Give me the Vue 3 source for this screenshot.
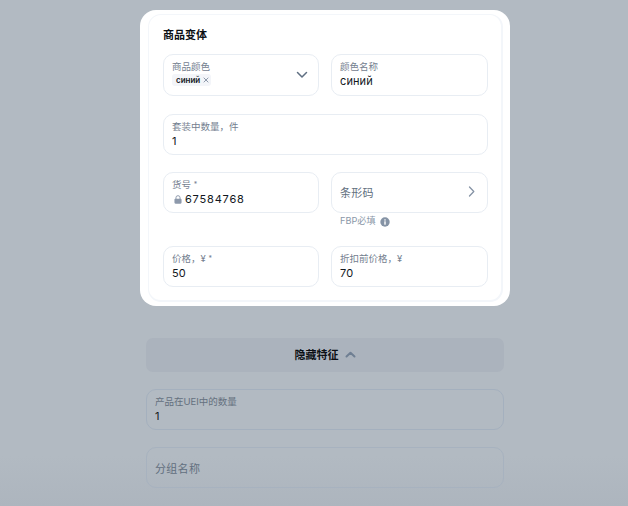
<script setup>
</script>

<template>
  <div class="page">
    <section class="card">
      <div class="inner">
        <h2 class="title">商品变体</h2>
        <div class="grid">
          <div class="field tall select">
            <div>
              <div class="label">商品颜色</div>
              <span class="tag">синий
                <svg width="6" height="6" viewBox="0 0 6 6"><path d="M.7.7l4.600 4.600M5.300.7L.7 5.300" stroke="#8d99ab" stroke-width="1" fill="none"/></svg>
              </span>
            </div>
            <svg class="chev" width="12" height="8" viewBox="0 0 12 8"><path d="M1.500 1.500L6 6l4.500-4.500" stroke="#5f6f82" stroke-width="1.500" fill="none" stroke-linecap="round" stroke-linejoin="round"/></svg>
          </div>
          <div class="field tall">
            <div class="label">颜色名称</div>
            <div class="value">синий</div>
          </div>
          <div class="field wide r2">
            <div class="label">套装中数量，件</div>
            <div class="value">1</div>
          </div>
          <div class="field r3">
            <div class="label">货号 <span class="star">*</span></div>
            <div class="value lockrow">
              <svg width="8" height="9" viewBox="0 0 9 10"><path d="M2.200 4.500V3a2.300 2.300 0 0 1 4.600 0v1.500" stroke="#8d99ab" stroke-width="1.100" fill="none"/><rect x="0.500" y="4.200" width="8" height="5.500" rx="1.200" fill="#8d99ab"/></svg>
              <span class="sku">67584768</span>
            </div>
          </div>
          <div class="r3col">
            <div class="field barcode">
              <span class="placeholder">条形码</span>
              <svg width="7" height="11" viewBox="0 0 7 11"><path d="M1.500 1L5.800 5.500 1.500 10" stroke="#8593a5" stroke-width="1.300" fill="none" stroke-linecap="round" stroke-linejoin="round"/></svg>
            </div>
            <div class="hint">FBP必填
              <svg width="10" height="10" viewBox="0 0 10 10"><circle cx="5" cy="5" r="4.700" fill="#8593a5"/><rect x="4.300" y="4.300" width="1.400" height="3.400" fill="#fff"/><rect x="4.300" y="2.300" width="1.400" height="1.300" fill="#fff"/></svg>
            </div>
          </div>
          <div class="field">
            <div class="label">价格，¥ <span class="star">*</span></div>
            <div class="value">50</div>
          </div>
          <div class="field">
            <div class="label">折扣前价格，¥</div>
            <div class="value">70</div>
          </div>
        </div>
      </div>
    </section>

    <section class="lower">
      <div class="toggle">
        <span>隐藏特征</span>
        <svg width="11" height="7" viewBox="0 0 11 7"><path d="M1.500 5.500L5.500 1.700l4 3.800" stroke="#6f7f93" stroke-width="2" fill="none" stroke-linecap="round" stroke-linejoin="round"/></svg>
      </div>
      <div class="field dim">
        <div class="label">产品在UEI中的数量</div>
        <div class="value">1</div>
      </div>
      <div class="field dim group">
        <span class="placeholder">分组名称</span>
      </div>
    </section>
  </div>
</template>

<style>
html, body { margin: 0; padding: 0; }
</style>

<style scoped>
.page {
  width: 628px;
  height: 506px;
  overflow: hidden;
  box-sizing: border-box;
  padding-top: 10px;
  background: linear-gradient(180deg, #b2bac2 0%, #b2bac2 90%, #adb5be 100%);
  font-family: Inter, "Noto Sans CJK SC", sans-serif;
  color: #0b0f14;
}
.card {
  width: 370px;
  height: 296px;
  margin-left: 140px;
  box-sizing: border-box;
  padding: 4px 7px 4px 8px;
  background: #fff;
  border-radius: 16px;
}
.inner {
  height: 100%;
  box-sizing: border-box;
  padding: 12px 14px 0 14px;
  border: 1px solid #f3f6fa;
  border-width: 1px 2px 2px 1px;
  border-radius: 13px;
}
.title {
  margin: 0;
  font-size: 11px;
  line-height: 16px;
  font-weight: 700;
  color: #0b0f14;
}
.grid {
  margin-top: 11px;
  display: grid;
  grid-template-columns: 156px 157px;
  column-gap: 12px;
}
.field {
  box-sizing: border-box;
  height: 41px;
  border: 1px solid #e8edf3;
  border-radius: 10px;
  padding: 5px 8px 0;
}
.tall { height: 42px; }
.select { display: flex; align-items: flex-start; justify-content: space-between; padding-right: 10px; }
.chev { align-self: center; margin-top: -5px; }
.wide { grid-column: 1 / 3; }
.r2 { margin-top: 18px; }
.r3 { margin-top: 17px; }
.r3col { margin-top: 17px; }
.label {
  font-size: 9.500px;
  line-height: 13px;
  color: #74808f;
}
.star { font-size: 7px; vertical-align: 1px; }
.value {
  font-size: 11px;
  line-height: 16px;
  letter-spacing: 0.1px;
  color: #12171d;
}
.tag {
  display: flex;
  width: fit-content;
  align-items: center;
  gap: 3px;
  height: 12px;
  padding: 0 2px 0 4px;
  margin-top: 1px;
  background: #f3f5f9;
  border-radius: 3px;
  font-size: 8px;
  font-weight: 600;
  color: #12171d;
}
.lockrow { display: flex; align-items: center; gap: 3px; margin-left: 2px; }
.sku { letter-spacing: 0.8px; }
.barcode { display: flex; align-items: center; justify-content: space-between; padding: 0 12px 2px 8px; }
.placeholder { font-size: 11px; letter-spacing: 0.3px; color: #626f7e; }
.hint {
  height: 33px;
  box-sizing: border-box;
  padding: 1px 0 0 9px;
  display: flex;
  align-items: flex-start;
  gap: 4px;
  font-size: 9.200px;
  line-height: 13px;
  color: #8a97a8;
}
.hint svg { margin-top: 3px; }
.lower { width: 358px; margin: 32px 0 0 146px; }
.toggle {
  height: 34px;
  box-sizing: border-box;
  padding-bottom: 2px;
  background: #abb3bd;
  border-radius: 7px;
  display: flex;
  align-items: center;
  justify-content: center;
  gap: 6px;
  font-size: 11px;
  font-weight: 600;
  color: #0b0f14;
}
.dim { border-color: #a4b0be; margin-top: 17px; }
.dim .label { color: #64707e; }
.dim .value { color: #141a20; }
.group { display: flex; align-items: center; padding-top: 0; border-color: #a7b2bf; }
.group .placeholder { color: #626f7e; }
</style>
